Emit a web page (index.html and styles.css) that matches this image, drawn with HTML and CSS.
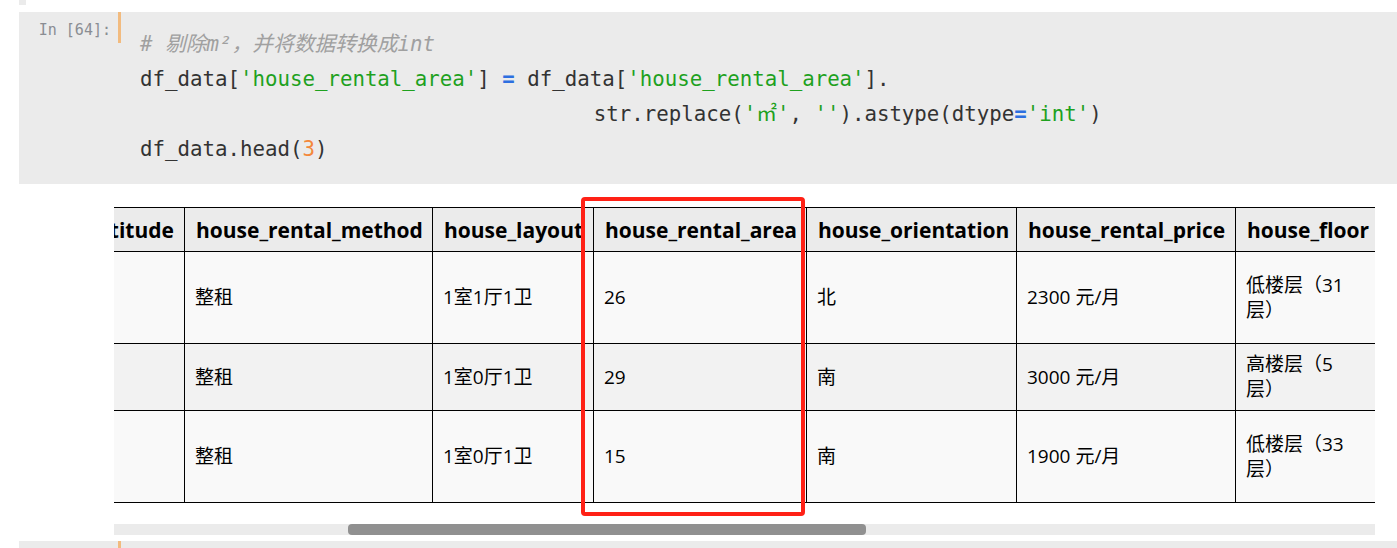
FILE: index.html
```html
<!DOCTYPE html>
<html lang="zh">
<head>
<meta charset="utf-8">
<title>Notebook</title>
<link rel="stylesheet" href="styles.css">
</head>
<body>
<div class="notebook">
  <div class="prev-tail"></div>
  <div class="cell code-cell">
    <div class="prompt">In [64]:</div>
    <div class="marker"></div>
<pre class="code"><span class="c"># 剔除m²，并将数据转换成int</span>
df_data[<span class="s">'house_rental_area'</span>] <span class="o">=</span> df_data[<span class="s">'house_rental_area'</span>].
                                    <span class="cont">str.replace(<span class="s">'㎡'</span>, <span class="s">''</span>).astype(dtype<span class="o">=</span><span class="s">'int'</span>)</span>
df_data.head(<span class="n">3</span>)</pre>
  </div>
  <div class="output">
    <div class="table-wrap">
      <table class="dataframe">
        <colgroup>
          <col class="w-lat">
          <col class="w-method">
          <col class="w-layout">
          <col class="w-area">
          <col class="w-orient">
          <col class="w-price">
          <col class="w-floor">
        </colgroup>
        <thead>
          <tr class="hrow">
            <th class="lat">house_latitude</th>
            <th>house_rental_method</th>
            <th>house_layout</th>
            <th>house_rental_area</th>
            <th>house_orientation</th>
            <th>house_rental_price</th>
            <th>house_floor</th>
          </tr>
        </thead>
        <tbody>
          <tr class="r1">
            <td></td>
            <td>整租</td>
            <td>1室1厅1卫</td>
            <td>26</td>
            <td>北</td>
            <td>2300 元/月</td>
            <td class="floor">低楼层（31层）</td>
          </tr>
          <tr class="r2">
            <td></td>
            <td>整租</td>
            <td>1室0厅1卫</td>
            <td>29</td>
            <td>南</td>
            <td>3000 元/月</td>
            <td class="floor">高楼层（5层）</td>
          </tr>
          <tr class="r3">
            <td></td>
            <td>整租</td>
            <td>1室0厅1卫</td>
            <td>15</td>
            <td>南</td>
            <td>1900 元/月</td>
            <td class="floor">低楼层（33层）</td>
          </tr>
        </tbody>
      </table>
    </div>
    <div class="hscroll"><div class="thumb"></div></div>
    <div class="highlight-box"></div>
  </div>
  <div class="cell next-cell">
    <div class="next-marker"></div>
  </div>
</div>
</body>
</html>
```

FILE: styles.css
```css
html, body {
  margin: 0;
  padding: 0;
  background: #ffffff;
}

body {
  width: 1397px;
  height: 548px;
  overflow: hidden;
}

.prev-tail {
  margin-left: 19px;
  width: 7px;
  height: 5px;
  background: #ebebeb;
}

.code-cell {
  margin: 7px 0 0 19px;
  height: 172px;
  background: #ebebeb;
  display: flex;
  align-items: flex-start;
}

.prompt {
  width: 92px;
  padding: 8px 7px 0 0;
  text-align: right;
  font-family: "DejaVu Sans Mono", monospace;
  font-size: 15px;
  line-height: 20px;
  color: #8a8d93;
}

.marker {
  width: 3px;
  height: 31px;
  background: #f2bb7f;
  flex: none;
}

.code {
  margin: 0 0 0 19px;
  padding-top: 15px;
  font-family: "DejaVu Sans Mono", "Noto Sans CJK SC", monospace;
  font-size: 20.75px;
  line-height: 35px;
  color: #333333;
  white-space: pre;
}

.code .cont {
  padding-left: 4px;
}

.code .c {
  color: #a0a0a0;
  font-style: italic;
}

.code .s {
  color: #1ea11e;
}

.code .o {
  color: #2d6fe0;
  font-weight: bold;
}

.code .n {
  color: #f4873a;
}

.output {
  position: relative;
  height: 357px;
  padding-top: 23px;
  box-sizing: border-box;
}

.table-wrap {
  margin-left: 114px;
  width: 1261px;
  overflow: hidden;
}

.dataframe {
  margin-left: -130px;
  border-collapse: collapse;
  table-layout: fixed;
  width: 1393px;
  font-family: "Open Sans", "Noto Sans CJK SC", sans-serif;
  color: #000;
}

.w-lat { width: 200px; }
.w-method { width: 248px; }
.w-layout { width: 161px; }
.w-area { width: 213px; }
.w-orient { width: 210px; }
.w-price { width: 219px; }
.w-floor { width: 142px; }

.dataframe th,
.dataframe td {
  border: 1px solid #000;
  padding: 0 10px;
  text-align: left;
  vertical-align: middle;
  white-space: normal;
}

.dataframe th {
  padding: 0 11px;
  font-size: 21px;
  font-weight: bold;
  background: #ebebeb;
  white-space: nowrap;
  overflow: hidden;
}

.dataframe th.lat {
  text-align: right;
  padding-right: 10px;
}

.dataframe td {
  font-size: 19px;
  line-height: 25px;
}

.dataframe td.floor {
  padding-right: 16px;
}

.hrow th { height: 43px; }
.r1 td { height: 91px; background: #f9f9f9; }
.r2 td { height: 66px; background: #f2f2f2; }
.r3 td { height: 91px; background: #f9f9f9; }

.hscroll {
  margin: 21px 0 0 114px;
  width: 1261px;
  height: 11px;
  background: #ebebeb;
  display: flex;
}

.thumb {
  margin-left: 234px;
  width: 518px;
  height: 11px;
  background: #909090;
  border-radius: 4px;
}

.highlight-box {
  position: absolute;
  left: 581px;
  top: 13px;
  width: 224px;
  height: 319px;
  box-sizing: border-box;
  border: 4px solid #ff2116;
  border-radius: 4px;
}

.next-cell {
  margin-left: 19px;
  height: 20px;
  background: #ebebeb;
}

.next-marker {
  margin-left: 99px;
  width: 3px;
  height: 20px;
  background: #f2bb7f;
}
```
